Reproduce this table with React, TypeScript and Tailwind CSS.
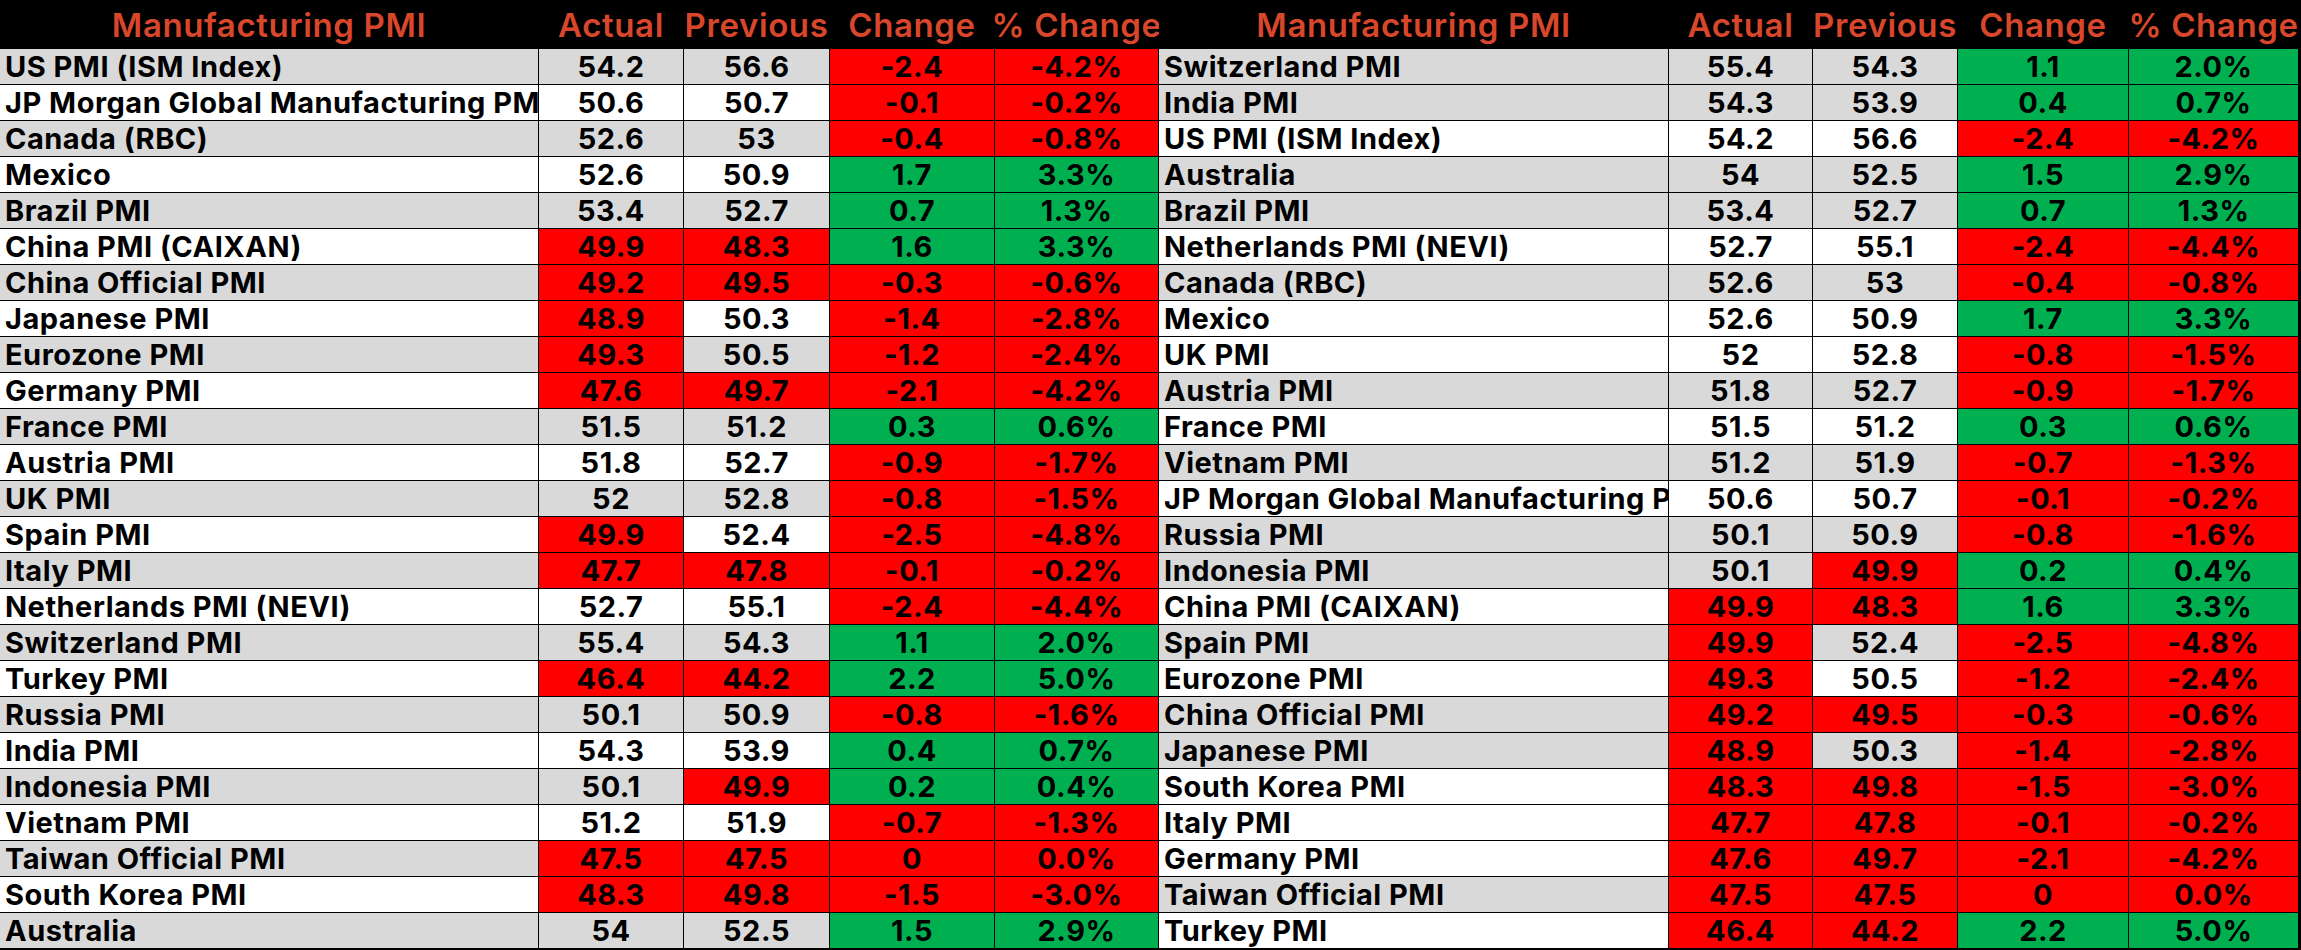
type Row = {
  name: string;
  actual: string;
  prev: string;
  change: string;
  pct: string;
  shade?: boolean;
};

// left table: plain alternating shading, odd rows grey
const leftRows: Row[] = [
  { name: "US PMI (ISM Index)", actual: "54.2", prev: "56.6", change: "-2.4", pct: "-4.2%" },
  { name: "JP Morgan Global Manufacturing PMI", actual: "50.6", prev: "50.7", change: "-0.1", pct: "-0.2%" },
  { name: "Canada (RBC)", actual: "52.6", prev: "53", change: "-0.4", pct: "-0.8%" },
  { name: "Mexico", actual: "52.6", prev: "50.9", change: "1.7", pct: "3.3%" },
  { name: "Brazil PMI", actual: "53.4", prev: "52.7", change: "0.7", pct: "1.3%" },
  { name: "China PMI (CAIXAN)", actual: "49.9", prev: "48.3", change: "1.6", pct: "3.3%" },
  { name: "China Official PMI", actual: "49.2", prev: "49.5", change: "-0.3", pct: "-0.6%" },
  { name: "Japanese PMI", actual: "48.9", prev: "50.3", change: "-1.4", pct: "-2.8%" },
  { name: "Eurozone PMI", actual: "49.3", prev: "50.5", change: "-1.2", pct: "-2.4%" },
  { name: "Germany PMI", actual: "47.6", prev: "49.7", change: "-2.1", pct: "-4.2%" },
  { name: "France PMI", actual: "51.5", prev: "51.2", change: "0.3", pct: "0.6%" },
  { name: "Austria PMI", actual: "51.8", prev: "52.7", change: "-0.9", pct: "-1.7%" },
  { name: "UK PMI", actual: "52", prev: "52.8", change: "-0.8", pct: "-1.5%" },
  { name: "Spain PMI", actual: "49.9", prev: "52.4", change: "-2.5", pct: "-4.8%" },
  { name: "Italy PMI", actual: "47.7", prev: "47.8", change: "-0.1", pct: "-0.2%" },
  { name: "Netherlands PMI (NEVI)", actual: "52.7", prev: "55.1", change: "-2.4", pct: "-4.4%" },
  { name: "Switzerland PMI", actual: "55.4", prev: "54.3", change: "1.1", pct: "2.0%" },
  { name: "Turkey PMI", actual: "46.4", prev: "44.2", change: "2.2", pct: "5.0%" },
  { name: "Russia PMI", actual: "50.1", prev: "50.9", change: "-0.8", pct: "-1.6%" },
  { name: "India PMI", actual: "54.3", prev: "53.9", change: "0.4", pct: "0.7%" },
  { name: "Indonesia PMI", actual: "50.1", prev: "49.9", change: "0.2", pct: "0.4%" },
  { name: "Vietnam PMI", actual: "51.2", prev: "51.9", change: "-0.7", pct: "-1.3%" },
  { name: "Taiwan Official PMI", actual: "47.5", prev: "47.5", change: "0", pct: "0.0%" },
  { name: "South Korea PMI", actual: "48.3", prev: "49.8", change: "-1.5", pct: "-3.0%" },
  { name: "Australia", actual: "54", prev: "52.5", change: "1.5", pct: "2.9%" },
].map((r, i) => ({ ...r, shade: i % 2 === 0 }));

const rightRows: Row[] = [
  { name: "Switzerland PMI", actual: "55.4", prev: "54.3", change: "1.1", pct: "2.0%", shade: true },
  { name: "India PMI", actual: "54.3", prev: "53.9", change: "0.4", pct: "0.7%", shade: true },
  { name: "US PMI (ISM Index)", actual: "54.2", prev: "56.6", change: "-2.4", pct: "-4.2%", shade: false },
  { name: "Australia", actual: "54", prev: "52.5", change: "1.5", pct: "2.9%", shade: true },
  { name: "Brazil PMI", actual: "53.4", prev: "52.7", change: "0.7", pct: "1.3%", shade: true },
  { name: "Netherlands PMI (NEVI)", actual: "52.7", prev: "55.1", change: "-2.4", pct: "-4.4%", shade: false },
  { name: "Canada (RBC)", actual: "52.6", prev: "53", change: "-0.4", pct: "-0.8%", shade: true },
  { name: "Mexico", actual: "52.6", prev: "50.9", change: "1.7", pct: "3.3%", shade: false },
  { name: "UK PMI", actual: "52", prev: "52.8", change: "-0.8", pct: "-1.5%", shade: false },
  { name: "Austria PMI", actual: "51.8", prev: "52.7", change: "-0.9", pct: "-1.7%", shade: true },
  { name: "France PMI", actual: "51.5", prev: "51.2", change: "0.3", pct: "0.6%", shade: false },
  { name: "Vietnam PMI", actual: "51.2", prev: "51.9", change: "-0.7", pct: "-1.3%", shade: true },
  { name: "JP Morgan Global Manufacturing PMI", actual: "50.6", prev: "50.7", change: "-0.1", pct: "-0.2%", shade: false },
  { name: "Russia PMI", actual: "50.1", prev: "50.9", change: "-0.8", pct: "-1.6%", shade: true },
  { name: "Indonesia PMI", actual: "50.1", prev: "49.9", change: "0.2", pct: "0.4%", shade: true },
  { name: "China PMI (CAIXAN)", actual: "49.9", prev: "48.3", change: "1.6", pct: "3.3%", shade: false },
  { name: "Spain PMI", actual: "49.9", prev: "52.4", change: "-2.5", pct: "-4.8%", shade: true },
  { name: "Eurozone PMI", actual: "49.3", prev: "50.5", change: "-1.2", pct: "-2.4%", shade: false },
  { name: "China Official PMI", actual: "49.2", prev: "49.5", change: "-0.3", pct: "-0.6%", shade: true },
  { name: "Japanese PMI", actual: "48.9", prev: "50.3", change: "-1.4", pct: "-2.8%", shade: true },
  { name: "South Korea PMI", actual: "48.3", prev: "49.8", change: "-1.5", pct: "-3.0%", shade: false },
  { name: "Italy PMI", actual: "47.7", prev: "47.8", change: "-0.1", pct: "-0.2%", shade: false },
  { name: "Germany PMI", actual: "47.6", prev: "49.7", change: "-2.1", pct: "-4.2%", shade: false },
  { name: "Taiwan Official PMI", actual: "47.5", prev: "47.5", change: "0", pct: "0.0%", shade: true },
  { name: "Turkey PMI", actual: "46.4", prev: "44.2", change: "2.2", pct: "5.0%", shade: false },
];

const RED = "bg-[#ff0000]";
const GREEN = "bg-[#00b050]";
const GREY = "bg-[#d9d9d9]";
const WHITE = "bg-white";

function base(shade?: boolean) {
  return shade ? GREY : WHITE;
}

function PmiTable({ rows, cols }: { rows: Row[]; cols: string }) {
  const heads = ["Manufacturing PMI", "Actual", "Previous", "Change", "% Change"];
  return (
    <div className={`grid ${cols} grid-rows-[48px] auto-rows-[35px] gap-px`}>
      {heads.map((h) => (
        <div
          key={h}
          className="flex items-center justify-center bg-black pt-[2px] text-[33px] font-semibold tracking-[0.6px] leading-none text-[#d8472b] whitespace-nowrap"
        >
          {h}
        </div>
      ))}
      {rows.map((r) => {
        const up = parseFloat(r.change) > 0;
        const actBg = parseFloat(r.actual) < 50 ? RED : base(r.shade);
        const prevBg = parseFloat(r.prev) < 50 ? RED : base(r.shade);
        const chgBg = up ? GREEN : RED;
        return [
          <div key={r.name + "n"} className={`flex items-center overflow-hidden whitespace-nowrap pl-[5px] ${base(r.shade)}`}>
            {r.name}
          </div>,
          <div key={r.name + "a"} className={`flex items-center justify-center ${actBg}`}>{r.actual}</div>,
          <div key={r.name + "p"} className={`flex items-center justify-center ${prevBg}`}>{r.prev}</div>,
          <div key={r.name + "c"} className={`flex items-center justify-center ${chgBg}`}>{r.change}</div>,
          <div key={r.name + "%"} className={`flex items-center justify-center ${chgBg}`}>{r.pct}</div>,
        ];
      })}
    </div>
  );
}

export default function App() {
  return (
    <div className="w-[2301px] h-[950px] bg-black overflow-hidden font-[Inter,sans-serif] text-[29px] font-bold tracking-[0.5px] leading-none text-black">
      <div className="flex gap-px">
        <PmiTable rows={leftRows} cols="grid-cols-[538px_144px_145px_164px_163px]" />
        <PmiTable rows={rightRows} cols="grid-cols-[509px_143px_144px_170px_169px]" />
      </div>
    </div>
  );
}
